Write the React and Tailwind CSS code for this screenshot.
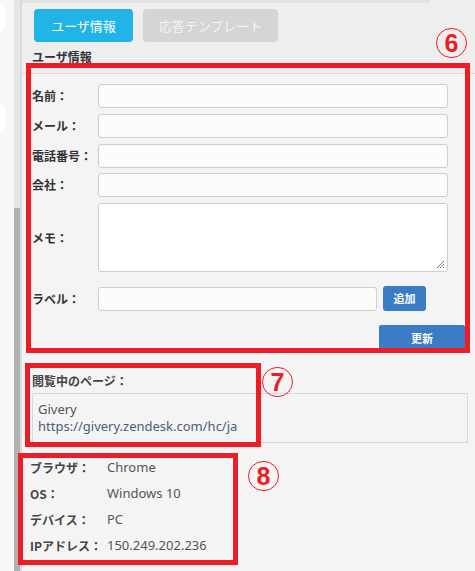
export default function App() {
  const jp = "font-['Meiryo','Noto_Sans_CJK_JP',sans-serif]";
  const Label = ({ children }) => (
    <div className="w-[66px] shrink-0 text-[12px] font-bold text-[#333]">{children}</div>
  );
  const Input = () => (
    <div className="h-[24px] flex-1 rounded-[3px] border border-[#cfcfcf] bg-[#fcfcfc]" />
  );
  const Circle = ({ n, cls }) => (
    <div
      className={`absolute flex h-[30px] w-[31px] items-center justify-center rounded-full border border-[#ee1c25] text-[25px] font-bold leading-none text-[#ee1c25] font-['Liberation_Sans',sans-serif] ${cls}`}
    >
      {n}
    </div>
  );
  const InfoRow = ({ k, v }) => (
    <div className="flex h-[26px] items-center">
      <div className="w-[77px] text-[12px] font-bold text-[#444]">{k}</div>
      <div className="text-[13px] text-[#555] font-['Noto_Sans','Noto_Sans_CJK_JP',sans-serif]">{v}</div>
    </div>
  );
  return (
    <div className={`relative flex h-[571px] w-[475px] overflow-hidden bg-[#f4f4f4] ${jp}`}>
      {/* left strip */}
      <div className="relative w-[14px] shrink-0 bg-[#f7f7f7]">
        <div className="absolute left-[-12px] top-[2px] h-[30px] w-[18px] rounded-full bg-white" />
        <div className="absolute left-[-12px] top-[102px] h-[32px] w-[18px] rounded-full bg-white" />
      </div>
      {/* scrollbar */}
      <div className="flex w-[6px] shrink-0 flex-col bg-[#e6e6e6]">
        <div className="h-[208px]" />
        <div className="flex-1 bg-[#b1b1b1]" />
      </div>
      <div className="w-[2px] shrink-0 bg-[#dadada]" />
      {/* main */}
      <div className="flex flex-1 flex-col">
        <div className="bg-[#eeeeee]">
          <div className="h-[3px] w-[408px] bg-[#e2e2e2]" />
          <div className="flex gap-[10px] pl-[12px] pt-[6px]">
            <div className="flex h-[33px] w-[99px] items-center justify-center rounded-[4px] bg-[#20b5e6] text-[13px] text-white">
              ユーザ情報
            </div>
            <div className="flex h-[33px] w-[135px] items-center justify-center rounded-[4px] bg-[#d5d5d5] text-[13px] text-[#f4f4f4]">
              応答テンプレート
            </div>
          </div>
          <div className="h-[31px] pl-[10px] pt-[7px] text-[12px] font-bold leading-[16px] text-[#333]">
            ユーザ情報
          </div>
        </div>
        <div className="border-t border-[#dcdcdc] pl-[10px] pr-[10px]">
          <div className="flex flex-col pt-[10px] pr-[17px]">
            <div className="flex items-center">
              <Label>名前：</Label>
              <Input />
            </div>
            <div className="mt-[6px] flex items-center">
              <Label>メール：</Label>
              <Input />
            </div>
            <div className="mt-[6px] flex items-center">
              <Label>電話番号：</Label>
              <Input />
            </div>
            <div className="mt-[5px] flex items-center">
              <Label>会社：</Label>
              <Input />
            </div>
            <div className="mt-[6px] flex items-center">
              <Label>メモ：</Label>
              <div className="relative h-[69px] flex-1 rounded-[3px] border border-[#cfcfcf] bg-white">
                <svg className="absolute bottom-[2px] right-[2px]" width="9" height="9" viewBox="0 0 9 9">
                  <path d="M8 1L1 8M8 4L4 8M8 7L7 8" stroke="#777" strokeWidth="1" />
                </svg>
              </div>
            </div>
          </div>
          <div className="mt-[14px] flex items-center">
            <Label>ラベル：</Label>
            <div className="h-[24px] w-[279px] rounded-[3px] border border-[#cfcfcf] bg-[#fcfcfc]" />
            <div className="ml-[6px] flex h-[25px] w-[43px] items-center justify-center rounded-[3px] bg-[#3a7cc6] text-[11px] font-bold text-white">
              追加
            </div>
          </div>
          <div className="mt-[14px] flex justify-end">
            <div className="flex h-[26px] w-[86px] items-center justify-center rounded-[2px] bg-[#3a7cc6] text-[11px] font-bold text-white">
              更新
            </div>
          </div>
          <div className="pt-[22px] text-[12px] font-bold leading-[16px] text-[#444]">閲覧中のページ：</div>
          <div className="mt-[4px] mr-[-3px] h-[50px] border border-[#d8d8d8] bg-[#f4f4f4] px-[5px] pt-[7px] text-[13px] leading-[17px] font-['Noto_Sans','Noto_Sans_CJK_JP',sans-serif]">
            <div className="text-[#555]">Givery</div>
            <div className="text-[#4b5d7c]">https://givery.zendesk.com/hc/ja</div>
          </div>
          <div className="mt-[12px] ml-[-2px] flex flex-col">
            <InfoRow k="ブラウザ：" v="Chrome" />
            <InfoRow k="OS：" v="Windows 10" />
            <InfoRow k="デバイス：" v="PC" />
            <InfoRow k="IPアドレス：" v="150.249.202.236" />
          </div>
        </div>
      </div>

      {/* annotations */}
      <div className="absolute left-[26px] top-[63px] h-[290px] w-[444px] border-[5px] border-[#ee1c25]" />
      <div className="absolute left-[25px] top-[363px] h-[84px] w-[236px] border-[5px] border-[#ee1c25]" />
      <div className="absolute left-[18px] top-[453px] h-[112px] w-[220px] border-[5px] border-[#ee1c25]" />
      <Circle n="6" cls="left-[436px] top-[28px]" />
      <Circle n="7" cls="left-[262px] top-[367px]" />
      <Circle n="8" cls="left-[248px] top-[461px]" />
    </div>
  );
}
